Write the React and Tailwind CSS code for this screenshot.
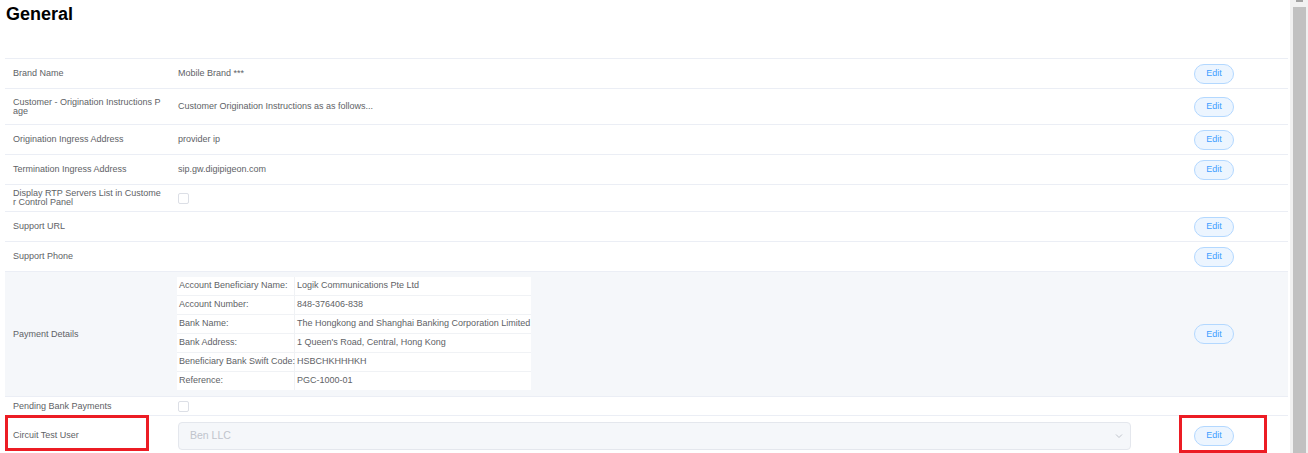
import React from "react";

const rows = [
  { label: "Brand Name", value: "Mobile Brand ***", edit: true, h: "h-[30px]" },
  { label: "Customer - Origination Instructions Page", value: "Customer Origination Instructions as as follows...", edit: true, h: "h-[36px]" },
  { label: "Origination Ingress Address", value: "provider ip", edit: true, h: "h-[30px]" },
  { label: "Termination Ingress Address", value: "sip.gw.digipigeon.com", edit: true, h: "h-[30px]" },
  { label: "Display RTP Servers List in Customer Control Panel", check: true, h: "h-[27px]" },
  { label: "Support URL", value: "", edit: true, h: "h-[30px]" },
  { label: "Support Phone", value: "", edit: true, h: "h-[30px]" },
];

const payment = [
  ["Account Beneficiary Name:", "Logik Communications Pte Ltd"],
  ["Account Number:", "848-376406-838"],
  ["Bank Name:", "The Hongkong and Shanghai Banking Corporation Limited"],
  ["Bank Address:", "1 Queen's Road, Central, Hong Kong"],
  ["Beneficiary Bank Swift Code:", "HSBCHKHHHKH"],
  ["Reference:", "PGC-1000-01"],
];

function EditButton() {
  return (
    <button className="w-[40px] h-[20px] rounded-full border border-[#b3d8ff] bg-[#ecf5ff] text-[#409eff] text-[9px] leading-none">
      Edit
    </button>
  );
}

function Checkbox() {
  return <span className="block w-[11px] h-[11px] rounded-[2px] border border-[#dcdfe6] bg-white" />;
}

function Row({ h, bg = "bg-white", label, children, edit }) {
  return (
    <div className={`flex items-center border-t border-[#ebeef5] ${h} ${bg}`}>
      <div className="w-[166px] shrink-0 pl-[8px] pr-[9px] break-all leading-[9px]">{label}</div>
      <div className="flex-1 pl-[7px] flex items-center">{children}</div>
      <div className="w-[102px] shrink-0 pl-[8px]">{edit && <EditButton />}</div>
    </div>
  );
}

export default function App() {
  return (
    <div
      className="flex h-[453px] overflow-hidden bg-white text-[9px] text-[#606266]"
      style={{ fontFamily: '"Liberation Sans", Arial, sans-serif' }}
    >
      <div className="relative flex-1">
        <h1 className="pl-[6px] pt-[4px] text-[18px] font-bold leading-[20px] text-black">General</h1>

        <div className="ml-[5px] mr-[2px] mt-[34px]">
          {rows.map((r) => (
            <Row key={r.label} h={r.h} label={r.label} edit={r.edit}>
              {r.check ? <Checkbox /> : r.value}
            </Row>
          ))}

          <Row h="h-[125px]" bg="bg-[#f5f7fa]" label="Payment Details" edit>
            <div className="-ml-[1px] -mt-[2px] grid grid-cols-[117px_236px] gap-px bg-[#f0f2f5]">
              {payment.map(([k, v]) => (
                <React.Fragment key={k}>
                  <div className="h-[18px] bg-white pl-[2px] flex items-center whitespace-nowrap">{k}</div>
                  <div className="h-[18px] bg-white pl-[2px] flex items-center whitespace-nowrap">{v}</div>
                </React.Fragment>
              ))}
            </div>
          </Row>

          <Row h="h-[19px]" label="Pending Bank Payments">
            <Checkbox />
          </Row>

          <Row h="h-[40px]" label="Circuit Test User" edit>
            <div className="w-[953px] h-[28px] rounded-[4px] border border-[#e4e7ed] bg-[#f5f7fa] flex items-center justify-between pl-[11px] pr-[7px]">
              <span className="text-[10.5px] text-[#c0c4cc]">Ben LLC</span>
              <svg width="8" height="6" viewBox="0 0 8 6" fill="none" stroke="#c0c4cc" strokeWidth="1">
                <path d="M1 1.5 L4 4.5 L7 1.5" />
              </svg>
            </div>
          </Row>
        </div>

        {/* annotation boxes */}
        <div className="absolute left-[5px] top-[415px] w-[144px] h-[36px] border-[3px] border-[#ec1c24]" />
        <div className="absolute left-[1179px] top-[415px] w-[88px] h-[38px] border-[3px] border-[#ec1c24]" />
      </div>

      <div className="w-[18px] shrink-0 bg-[#f1f1f1] flex flex-col items-center">
        <div className="w-[7px] h-[2px] bg-[#a3a3a3]" />
        <div className="w-[13px] flex-1 mt-[5px] bg-[#c1c1c1]" />
      </div>
    </div>
  );
}
